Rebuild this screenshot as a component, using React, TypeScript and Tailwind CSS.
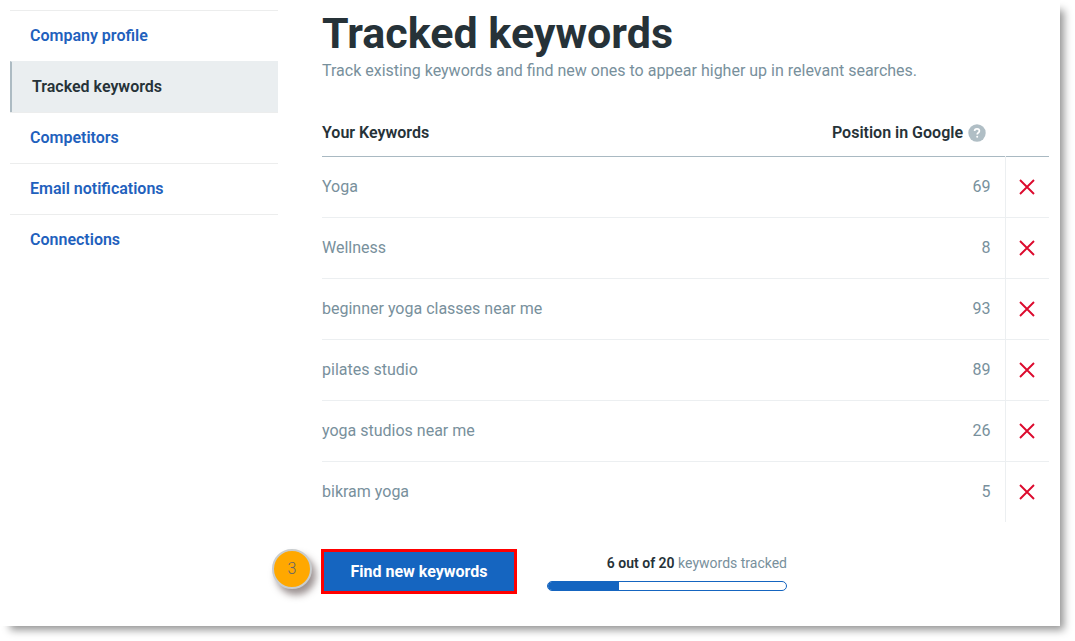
import clsx from 'clsx';

interface Keyword {
  name: string;
  position: number;
}

const NAV_ITEMS = [
  'Company profile',
  'Tracked keywords',
  'Competitors',
  'Email notifications',
  'Connections',
];

const KEYWORDS: Keyword[] = [
  { name: 'Yoga', position: 69 },
  { name: 'Wellness', position: 8 },
  { name: 'beginner yoga classes near me', position: 93 },
  { name: 'pilates studio', position: 89 },
  { name: 'yoga studios near me', position: 26 },
  { name: 'bikram yoga', position: 5 },
];

const KEYWORD_LIMIT = 20;

const SideNav = ({ active }: { active: string }) => (
  <nav className="w-[268px] shrink-0 pt-[10px]">
    <ul>
      {NAV_ITEMS.map((item) => {
        const isActive = item === active;

        return (
          <li key={item}>
            <a
              href="#"
              aria-current={isActive ? 'page' : undefined}
              className={clsx(
                'flex h-[51px] items-center border-t pl-5 font-semibold',
                isActive
                  ? 'border-t-[#eaeef0] border-l-2 border-l-[#adbbc3] bg-[#eaeef0] text-[#263238]'
                  : 'border-t-[#eceded] text-[#1f61bd]'
              )}
            >
              {item}
            </a>
          </li>
        );
      })}
    </ul>
  </nav>
);

const KeywordTable = ({ keywords }: { keywords: Keyword[] }) => (
  <table className="w-full border-collapse">
    <thead>
      <tr className="h-[50px] border-b border-[#a9b9c2] text-[#263238]">
        <th scope="col" className="pt-1 text-left font-semibold">
          Your Keywords
        </th>
        <th scope="col" className="pt-1 pr-[19px] font-semibold">
          <div className="flex items-center justify-end gap-[5px]">
            <span>Position in Google</span>
            <button type="button" aria-label="About the position">
              <svg viewBox="0 0 18 18" className="block h-[18px] w-[18px]">
                <circle cx="9" cy="9" r="8.7" fill="#b0bec5" />
                <path
                  d="M6.6 7.1c0-1.4 1-2.3 2.4-2.3s2.4.8 2.4 2.1c0 1-.6 1.4-1.3 2-.6.5-.9.9-.9 1.7"
                  fill="none"
                  stroke="#fff"
                  strokeWidth="1.7"
                />
                <circle cx="9.2" cy="12.8" r="1" fill="#fff" />
              </svg>
            </button>
          </div>
        </th>
        <td className="w-11" />
      </tr>
    </thead>
    <tbody>
      {keywords.map(({ name, position }) => (
        <tr
          key={name}
          className="h-[61px] border-b border-[#eceff1] text-[#78909c] last:border-b-0"
        >
          <td>{name}</td>
          <td className="pr-[14px] text-right">{position}</td>
          <td className="border-l border-[#eceff1]">
            <button
              type="button"
              aria-label={`Remove ${name}`}
              className="mx-auto block"
            >
              <svg viewBox="0 0 16 16" className="block h-4 w-4">
                <path
                  d="M1 1l14 14M15 1L1 15"
                  fill="none"
                  stroke="#dc0a2d"
                  strokeWidth="1.9"
                />
              </svg>
            </button>
          </td>
        </tr>
      ))}
    </tbody>
  </table>
);

const TrackedProgress = ({ used, limit }: { used: number; limit: number }) => (
  <div className="w-60 pt-1">
    <p className="text-right text-sm leading-5 text-[#78909c]">
      <span className="font-semibold text-[#263238]">
        {used} out of {limit}
      </span>{' '}
      keywords tracked
    </p>
    <div
      role="progressbar"
      aria-label="Keywords tracked"
      aria-valuenow={used}
      aria-valuemax={limit}
      className="mt-2 h-[10px] overflow-hidden rounded-full border border-[#1565c0] bg-white"
    >
      <div
        className="h-full bg-[#1565c0]"
        style={{ width: `${(used / limit) * 100}%` }}
      />
    </div>
  </div>
);

const App = () => {
  return (
    <div className="bg-white pr-[15px] pb-[15px] font-[Roboto,sans-serif] text-base">
      <div className="flex gap-11 bg-white pr-[11px] pb-8 pl-[10px] shadow-[7px_7px_8px_-3px_rgba(0,0,0,0.42)]">
        <SideNav active="Tracked keywords" />
        <main className="min-w-0 flex-1 pt-2">
          <h1 className="text-[43px] leading-[51px] font-bold text-[#263238]">
            Tracked keywords
          </h1>
          <p className="text-[#78909c]">
            Track existing keywords and find new ones to appear higher up in
            relevant searches.
          </p>
          <div className="pt-[23px]">
            <KeywordTable keywords={KEYWORDS} />
          </div>
          <div className="flex items-start gap-[30px] pt-[27px]">
            <div className="relative">
              <button
                type="button"
                className="-ml-px block h-[45px] w-[196px] border-3 border-[#ff0000] bg-[#1565c0] font-bold text-white"
              >
                Find new keywords
              </button>
              <span className="absolute top-0 right-full mr-[10px] flex h-10 w-10 items-center justify-center rounded-full border-2 border-[#c9cdcf] bg-[#ffa800] font-light text-[#666666] shadow-[4px_6px_7px_rgba(60,40,40,0.5)]">
                3
              </span>
            </div>
            <TrackedProgress used={KEYWORDS.length} limit={KEYWORD_LIMIT} />
          </div>
        </main>
      </div>
    </div>
  );
};

export default App;
